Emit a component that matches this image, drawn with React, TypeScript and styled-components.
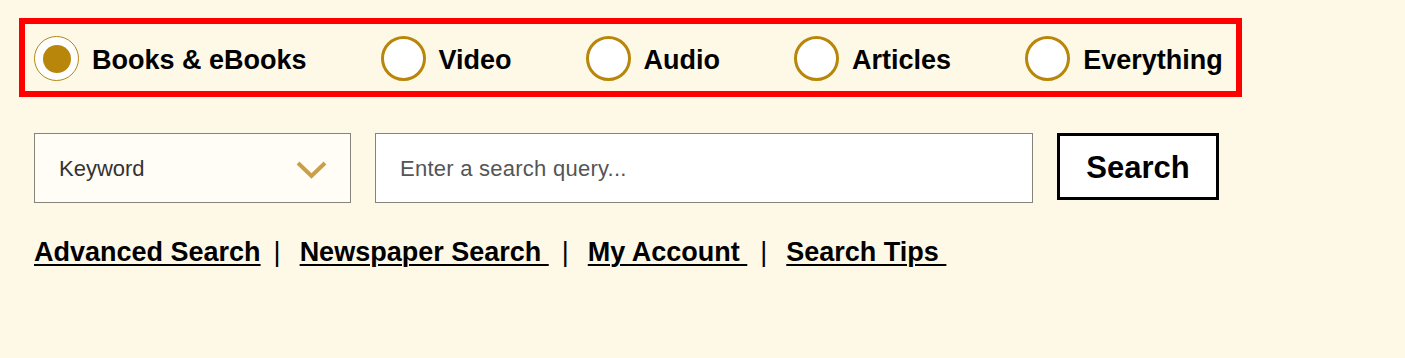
import React, { useState } from 'react';
import styled, { createGlobalStyle } from 'styled-components';

const GlobalStyle = createGlobalStyle`
  html, body {
    margin: 0;
    padding: 0;
    background: #fef9e7;
  }
  body {
    font-family: "Liberation Sans", Arial, sans-serif;
    color: #000;
  }
`;

const formats = ['Books & eBooks', 'Video', 'Audio', 'Articles', 'Everything'];

const links = ['Advanced Search', 'Newspaper Search\u00a0', 'My Account\u00a0', 'Search Tips\u00a0'];

const Page = styled.div`
  width: 1405px;
  height: 358px;
  box-sizing: border-box;
  padding: 18px 0 0 19px;
`;

const FormatBox = styled.div`
  width: 1223px;
  height: 79px;
  box-sizing: border-box;
  border: 6px solid #ff0000;
  display: flex;
  align-items: center;
  gap: 74px;
  padding: 2px 0 0 9px;
`;

const FormatOption = styled.label`
  display: flex;
  align-items: center;
  gap: 13px;
  cursor: pointer;
  font-size: 27px;
  font-weight: 700;
`;

const OptionText = styled.span`
  padding-top: 3px;
`;

const RadioCircle = styled.span<{ $checked: boolean }>`
  width: 45px;
  height: 45px;
  box-sizing: border-box;
  border-radius: 50%;
  background: #fff;
  border: ${({ $checked }) => ($checked ? '1.5px' : '3px')} solid #b8860b;
  display: flex;
  align-items: center;
  justify-content: center;

  &::after {
    content: '';
    width: 28px;
    height: 28px;
    border-radius: 50%;
    background: #b8860b;
    display: ${({ $checked }) => ($checked ? 'block' : 'none')};
  }
`;

const SearchRow = styled.div`
  display: flex;
  align-items: flex-start;
  gap: 24px;
  margin-top: 36px;
  padding-left: 15px;
`;

const SelectBox = styled.div`
  width: 317px;
  height: 70px;
  box-sizing: border-box;
  border: 1.5px solid #85837a;
  background: #fffdf6;
  display: flex;
  align-items: center;
  justify-content: space-between;
  padding: 2px 23px 0 24px;
  font-size: 22px;
  color: #333;
`;

const QueryInput = styled.input`
  width: 658px;
  height: 70px;
  box-sizing: border-box;
  border: 1.5px solid #85837a;
  background: #fff;
  padding: 2px 24px 0;
  font-family: "Liberation Sans", Arial, sans-serif;
  font-size: 22px;
  letter-spacing: 0.25px;
  outline: none;

  &::placeholder {
    color: #555;
  }
`;

const SearchButton = styled.button`
  width: 162px;
  height: 67px;
  box-sizing: border-box;
  border: 3px solid #000;
  background: #fff;
  font-family: "Liberation Sans", Arial, sans-serif;
  font-size: 31px;
  font-weight: 700;
  color: #000;
  padding: 2px 0 0;
  cursor: pointer;
`;

const LinkRow = styled.div`
  display: flex;
  align-items: baseline;
  margin-top: 34px;
  padding-left: 15px;
  font-size: 27px;
  line-height: 30px;
  font-weight: 700;
`;

const NavLink = styled.a`
  color: #000;
  text-decoration: underline;
  text-decoration-thickness: 2px;
  text-underline-offset: 3px;
  white-space: pre;
`;

const Separator = styled.span`
  margin: 0 19px 0 13px;
  font-weight: 400;
`;

const Chevron = () => (
  <svg width="31" height="19" viewBox="0 0 31 19">
    <path d="M2 3 L15.5 16 L29 3" fill="none" stroke="#c9a04a" strokeWidth="4" />
  </svg>
);

const App: React.FC = () => {
  const [format, setFormat] = useState(formats[0]);

  return (
    <Page>
      <GlobalStyle />
      <FormatBox>
        {formats.map(f => (
          <FormatOption key={f} onClick={() => setFormat(f)}>
            <RadioCircle $checked={format === f} />
            <OptionText>{f}</OptionText>
          </FormatOption>
        ))}
      </FormatBox>

      <SearchRow>
        <SelectBox>
          <span>Keyword</span>
          <Chevron />
        </SelectBox>
        <QueryInput type="text" placeholder="Enter a search query..." />
        <SearchButton type="button">Search</SearchButton>
      </SearchRow>

      <LinkRow>
        {links.map((l, i) => (
          <React.Fragment key={l}>
            {i > 0 && <Separator>|</Separator>}
            <NavLink href="#">{l}</NavLink>
          </React.Fragment>
        ))}
      </LinkRow>
    </Page>
  );
};

export default App;
